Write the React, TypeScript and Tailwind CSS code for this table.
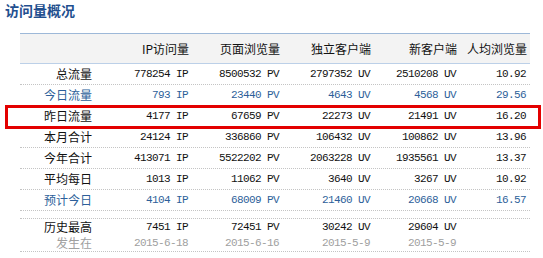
import React from "react";

type Row = {
  label: string;
  cells: string[];
  tone?: "blue" | "black";
};

const rows: Row[] = [
  { label: "总流量", cells: ["778254 IP", "8500532 PV", "2797352 UV", "2510208 UV", "10.92"] },
  { label: "今日流量", cells: ["793 IP", "23440 PV", "4643 UV", "4568 UV", "29.56"], tone: "blue" },
  { label: "昨日流量", cells: ["4177 IP", "67659 PV", "22273 UV", "21491 UV", "16.20"] },
  { label: "本月合计", cells: ["24124 IP", "336860 PV", "106432 UV", "100862 UV", "13.96"] },
  { label: "今年合计", cells: ["413071 IP", "5522202 PV", "2063228 UV", "1935561 UV", "13.37"] },
  { label: "平均每日", cells: ["1013 IP", "11062 PV", "3640 UV", "3267 UV", "10.92"] },
  { label: "预计今日", cells: ["4104 IP", "68009 PV", "21460 UV", "20668 UV", "16.57"], tone: "blue" },
];

const headers = ["", "IP访问量", "页面浏览量", "独立客户端", "新客户端", "人均浏览量"];

const cjk = "font-['Noto_Sans_CJK_SC',sans-serif] text-[12px]";
const mono = "font-['Liberation_Mono','Noto_Sans_CJK_SC',monospace] text-[11px] tracking-[-0.6px]";
const cols = "grid grid-cols-[76px_96px_91px_91px_86px_70px]";

const App = () => {
  return (
    <div className="relative w-[543px] h-[258px] bg-white overflow-hidden text-black">
      {/* Title */}
      <div className="h-[33px] pl-[5px] pt-[1px]">
        <h2 className="font-['Noto_Sans_CJK_SC',sans-serif] text-[14px] leading-[18px] font-bold text-[#1f4f8f]">
          访问量概况
        </h2>
      </div>

      {/* Table */}
      <div className="ml-[20px] w-[510px]">
        <div className={`${cols} h-[31px] items-center bg-[#f3f3f3] border-t border-b border-t-[#9db8d8] border-b-[#bcd0e8]`}>
          {headers.map((h, i) => (
            <div key={i} className={`${cjk} text-right pr-[3px] leading-[16px] text-[#111]`}>
              {h}
            </div>
          ))}
        </div>

        {rows.map((r) => {
          const color = r.tone === "blue" ? "text-[#2d5f9a]" : "text-[#111]";
          return (
            <div
              key={r.label}
              className={`${cols} h-[21px] items-center border-b border-dotted border-[#c4c4c4] ${color}`}
            >
              <div className={`${cjk} text-right pr-[4px] leading-[16px]`}>{r.label}</div>
              {r.cells.map((c, i) => (
                <div key={i} className={`${mono} text-right pr-[4px] leading-[16px]`}>
                  {c}
                </div>
              ))}
            </div>
          );
        })}

        {/* spacer row */}
        <div className="h-[8px] border-b border-dotted border-[#c4c4c4]" />

        {/* record row */}
        <div className={`${cols} h-[33px] border-b border-dotted border-[#c4c4c4]`}>
          <div className="flex flex-col items-end pr-[4px]">
            <span className={`${cjk} leading-[16px] text-[#111]`}>历史最高</span>
            <span className={`${cjk} leading-[16px] text-[#a0a0a0]`}>发生在</span>
          </div>
          {[
            ["7451 IP", "2015-6-18"],
            ["72451 PV", "2015-6-16"],
            ["30242 UV", "2015-5-9"],
            ["29604 UV", "2015-5-9"],
            ["", ""],
          ].map(([v, d], i) => (
            <div key={i} className="flex flex-col items-end pr-[4px]">
              <span className={`${mono} leading-[16px] text-[#111]`}>{v}</span>
              <span className={`${mono} leading-[16px] text-[#a0a0a0]`}>{d}</span>
            </div>
          ))}
        </div>
      </div>

      {/* highlight annotation */}
      <div className="absolute left-[5px] top-[105px] w-[536px] h-[24px] border-[3px] border-[#e30000]" />
    </div>
  );
};

export default App;
